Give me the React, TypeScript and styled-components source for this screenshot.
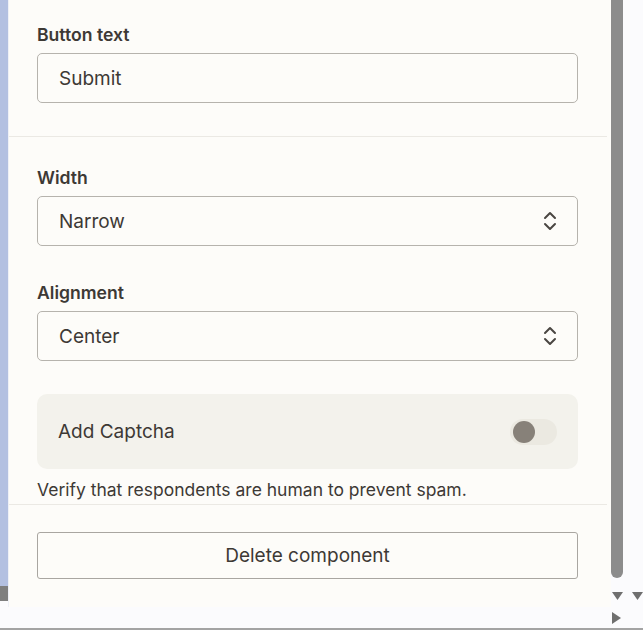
import React from "react";
import styled, { createGlobalStyle } from "styled-components";

const Global = createGlobalStyle`
  html, body { margin: 0; padding: 0; background: #fbfbfd; }
  body { font-family: Inter, "Noto Sans", sans-serif; color: #3d3935; }
  * { box-sizing: border-box; }
`;

const Frame = styled.div`
  width: 643px;
  height: 630px;
  display: grid;
  grid-template-columns: 9px 602px 12px 20px;
  grid-template-rows: 607px 23px;
  overflow: hidden;
  background: #fbfbfd;
`;

const LeftStrip = styled.div`
  display: flex;
  flex-direction: column;
  border-right: 1px solid #eef0f6;
`;

const StripBlue = styled.div`
  height: 586px;
  background: #b3c0e1;
`;

const StripGrey = styled.div`
  height: 15px;
  background: #7f7f7f;
`;

const Panel = styled.div`
  background: #fdfcf9;
  display: flex;
  flex-direction: column;
`;

const Section = styled.div<{ $pt: number; $pb: number; $divider?: boolean }>`
  padding: ${(p) => p.$pt}px 28px ${(p) => p.$pb}px 28px;
  border-bottom: ${(p) => (p.$divider ? "1px solid #ebe9e4" : "none")};
  margin-right: 4px;
  display: flex;
  flex-direction: column;
`;

const Label = styled.div<{ $mt?: number }>`
  font-size: 17.6px;
  line-height: 24px;
  font-weight: 600;
  color: #3d3935;
  margin-top: ${(p) => p.$mt ?? 0}px;
  margin-bottom: 6px;
`;

const Field = styled.div`
  width: 541px;
  height: 50px;
  border: 1px solid #b6b3ad;
  border-radius: 5px;
  background: #fdfcf9;
  display: flex;
  align-items: center;
  justify-content: space-between;
  padding: 0 20px 0 21px;
  font-size: 19px;
  color: #3d3935;
`;

const Chevrons = () => (
  <svg width="14" height="22" viewBox="0 0 14 22" fill="none">
    <path d="M2 8 L7 3 L12 8" stroke="#4a4642" strokeWidth="2" strokeLinecap="round" strokeLinejoin="round" />
    <path d="M2 14 L7 19 L12 14" stroke="#4a4642" strokeWidth="2" strokeLinecap="round" strokeLinejoin="round" />
  </svg>
);

const CaptchaBox = styled.div`
  width: 541px;
  height: 75px;
  margin-top: 33px;
  border-radius: 10px;
  background: #f3f2ec;
  display: flex;
  align-items: center;
  justify-content: space-between;
  padding: 0 21px 0 21px;
  font-size: 19px;
  color: #3d3935;
`;

const Toggle = styled.div`
  width: 47px;
  height: 26px;
  border-radius: 13px;
  background: #ebe9e1;
  display: flex;
  align-items: center;
  padding-left: 3px;
`;

const Knob = styled.div`
  width: 22px;
  height: 22px;
  border-radius: 50%;
  background: #878179;
`;

const Help = styled.div`
  margin-top: 9px;
  font-size: 17.5px;
  line-height: 24px;
  color: #3d3935;
`;

const DeleteButton = styled.button`
  width: 541px;
  height: 47px;
  border: 1px solid #a9a6a1;
  border-radius: 3px;
  background: #fdfcf9;
  font-family: Inter, "Noto Sans", sans-serif;
  font-size: 19px;
  color: #3d3935;
  padding: 0;
`;

const ScrollCol = styled.div`
  display: flex;
  flex-direction: column;
  align-items: center;
  background: #fbfbfd;
`;

const Thumb = styled.div`
  width: 12px;
  height: 578px;
  background: #8c8c8c;
  border-radius: 0 0 6px 6px;
`;

const ArrowBox = styled.div<{ $mt: number }>`
  margin-top: ${(p) => p.$mt}px;
  display: flex;
`;

const RightCol = styled.div`
  background: #fbfbfd;
  display: flex;
  flex-direction: column;
  padding-left: 9px;
`;

const BottomBar = styled.div`
  grid-column: 1 / 5;
  background: #fbfbfd;
  border-bottom: 2px solid #a3a3a3;
  display: flex;
  align-items: center;
  padding-left: 612px;
`;

const Down = () => (
  <svg width="11" height="10" viewBox="0 0 11 10">
    <path d="M0 1 L11 1 L5.5 9 Z" fill="#6f6f6f" />
  </svg>
);

const Right = () => (
  <svg width="9" height="12" viewBox="0 0 9 12">
    <path d="M0 0 L9 6 L0 12 Z" fill="#6f6f6f" />
  </svg>
);

export default function App() {
  return (
    <>
      <Global />
      <Frame>
        <LeftStrip>
          <StripBlue />
          <StripGrey />
        </LeftStrip>
        <Panel>
          <Section $pt={23} $pb={33} $divider>
            <Label>Button text</Label>
            <Field>Submit</Field>
          </Section>
          <Section $pt={29} $pb={2} $divider>
            <Label>Width</Label>
            <Field>
              Narrow
              <Chevrons />
            </Field>
            <Label $mt={35}>Alignment</Label>
            <Field>
              Center
              <Chevrons />
            </Field>
            <CaptchaBox>
              Add Captcha
              <Toggle>
                <Knob />
              </Toggle>
            </CaptchaBox>
            <Help>Verify that respondents are human to prevent spam.</Help>
          </Section>
          <Section $pt={27} $pb={0}>
            <DeleteButton>Delete component</DeleteButton>
          </Section>
        </Panel>
        <ScrollCol>
          <Thumb />
          <ArrowBox $mt={13}>
            <Down />
          </ArrowBox>
        </ScrollCol>
        <RightCol>
          <ArrowBox $mt={591}>
            <Down />
          </ArrowBox>
        </RightCol>
        <BottomBar>
          <Right />
        </BottomBar>
      </Frame>
    </>
  );
}
